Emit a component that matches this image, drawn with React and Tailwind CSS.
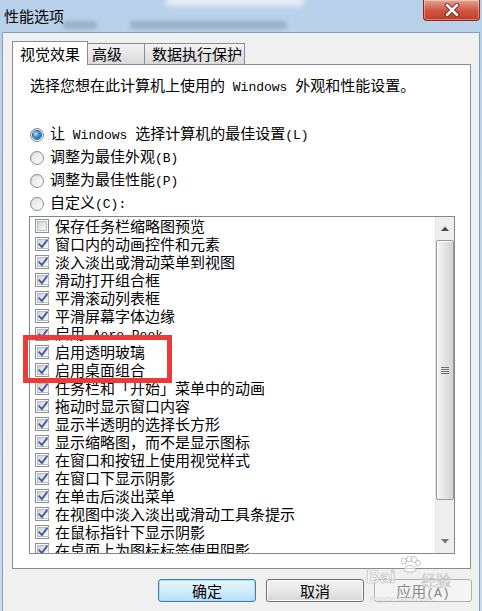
import React from "react";

function T({ text }) {
  const parts = text.match(/[\x00-\x7F]+|[^\x00-\x7F]+/g) || [];
  return parts.map((p, i) =>
    /^[\x00-\x7F]+$/.test(p) ? (
      <span key={i} className="[font-family:'Liberation_Mono',monospace] text-[13px] whitespace-pre">
        {p}
      </span>
    ) : (
      <span key={i}>{p}</span>
    )
  );
}

function Check({ checked }) {
  return (
    <span className="w-[14px] h-[14px] border border-[#8e8f8f] bg-white p-[1px] flex shrink-0">
      <span className="flex-1 bg-linear-to-br from-[#cfd2d5] to-[#fbfbfb] border border-[#b9bcbf] flex items-center justify-center">
        {checked && (
          <svg width="10" height="10" viewBox="0 0 10 10">
            <path d="M1.3 5.3 L3.9 8 L8.8 1.6" stroke="#3f5aa5" strokeWidth="1.9" fill="none" strokeLinecap="square" />
          </svg>
        )}
      </span>
    </span>
  );
}

function Radio({ on }) {
  return (
    <span className="w-[14px] h-[14px] rounded-full border border-[#8e8f8f] bg-linear-to-br from-[#cdd0d3] to-[#fdfdfd] flex items-center justify-center shrink-0">
      {on ? (
        <span className="w-[8px] h-[8px] rounded-full bg-[radial-gradient(circle_at_35%_35%,#bfe6fb_0%,#3c95d2_40%,#104c80_100%)] ring-1 ring-[#2c5f8c]" />
      ) : (
        <span className="w-[10px] h-[10px] rounded-full bg-linear-to-br from-[#e2e3e4] to-[#fbfbfb]" />
      )}
    </span>
  );
}

const items = [
  ["保存任务栏缩略图预览", false],
  ["窗口内的动画控件和元素", true],
  ["淡入淡出或滑动菜单到视图", true],
  ["滑动打开组合框", true],
  ["平滑滚动列表框", true],
  ["平滑屏幕字体边缘", true],
  ["启用 Aero Peek", true],
  ["启用透明玻璃", true],
  ["启用桌面组合", true],
  ["任务栏和「开始」菜单中的动画", true],
  ["拖动时显示窗口内容", true],
  ["显示半透明的选择长方形", true],
  ["显示缩略图，而不是显示图标", true],
  ["在窗口和按钮上使用视觉样式", true],
  ["在窗口下显示阴影", true],
  ["在单击后淡出菜单", true],
  ["在视图中淡入淡出或滑动工具条提示", true],
  ["在鼠标指针下显示阴影", true],
  ["在桌面上为图标标签使用阴影", true],
];

const radios = [
  ["让 Windows 选择计算机的最佳设置(L)", true],
  ["调整为最佳外观(B)", false],
  ["调整为最佳性能(P)", false],
  ["自定义(C):", false],
];

export default function App() {
  return (
    <div className="w-[482px] h-[611px] relative overflow-hidden flex flex-col bg-linear-to-b from-[#b8d0e9] to-[#cadcef] text-black [font-family:'Noto_Sans_CJK_SC',sans-serif]">
      {/* Title bar */}
      <div className="h-[32px] relative flex items-start shrink-0">
        <div className="absolute left-[165px] top-[-4px] w-[140px] h-[10px] rounded-full bg-white/70 blur-[3px]" />
        <div className="absolute left-[63px] top-[21px] w-[34px] h-[8px] rounded-sm bg-[#7f90a6]/50 blur-[2px]" />
        <div className="absolute left-[130px] top-[21px] w-[157px] h-[8px] rounded-sm bg-[#7f90a6]/50 blur-[2px]" />
        <span className="relative ml-[4px] mt-[7px] text-[15px] leading-[18px]">性能选项</span>
        <div className="relative ml-auto mr-[2px] w-[57px] h-[21px] rounded-b-[4px] border border-t-0 border-[#8a2b1d] bg-linear-to-b from-[#e5a495] via-[#cf5844] to-[#c23a26] flex items-center justify-center shadow-[inset_0_0_0_1px_rgba(255,255,255,0.35)]">
          <svg width="16" height="14" viewBox="0 0 16 14">
            <path d="M3 2 L13 12 M13 2 L3 12" stroke="#5a1a12" strokeWidth="4.2" strokeLinecap="round" />
            <path d="M3 2 L13 12 M13 2 L3 12" stroke="#ffffff" strokeWidth="2.6" strokeLinecap="round" />
          </svg>
        </div>
      </div>

      {/* Dialog body */}
      <div className="flex-1 mx-[2px] bg-[#f0f0f0] border border-b-0 border-[#8d9cae] flex flex-col pl-[9px] pt-[8px]">
        {/* Tabs */}
        <div className="flex items-end h-[23px] text-[15px]">
          <div className="relative z-10 -mb-px h-[24px] w-[76px] bg-white border border-b-0 border-[#898c95] flex items-center justify-center leading-[18px]">
            视觉效果
          </div>
          <div className="-ml-px h-[21px] w-[58px] border border-b-0 border-[#898c95] bg-linear-to-b from-[#f3f3f3] to-[#dadada] flex items-center pl-[4px] leading-[18px]">
            高级
          </div>
          <div className="-ml-px h-[21px] w-[101px] border border-b-0 border-[#898c95] bg-linear-to-b from-[#f3f3f3] to-[#dadada] flex items-center pl-[7px] leading-[18px]">
            数据执行保护
          </div>
        </div>

        {/* Panel */}
        <div className="w-[459px] h-[505px] border border-[#898c95] bg-white pl-[17px] pt-[11px] text-[15px] leading-[18px] flex flex-col">
          <div className="h-[18px] whitespace-nowrap">
            <T text="选择您想在此计算机上使用的 Windows 外观和性能设置。" />
          </div>

          <div className="mt-[29px] flex flex-col">
            {radios.map(([label, on]) => (
              <div key={label} className="h-[23px] flex items-center gap-[6px] whitespace-nowrap">
                <Radio on={on} />
                <span>
                  <T text={label} />
                </span>
              </div>
            ))}
          </div>

          {/* List box */}
          <div className="mt-[1px] -ml-px w-[426px] h-[338px] border border-[#828790] flex">
            <div className="flex-1 overflow-hidden flex flex-col pl-[5px]">
              {items.map(([label, checked]) => (
                <div key={label} className="h-[18px] shrink-0 flex items-center gap-[6px] whitespace-nowrap">
                  <Check checked={checked} />
                  <span>
                    <T text={label} />
                  </span>
                </div>
              ))}
            </div>
            {/* Scrollbar */}
            <div className="w-[19px] flex flex-col bg-[#eeeeee] border-l border-[#e4e4e4]">
              <div className="h-[23px] flex items-center justify-center">
                <svg width="8" height="5" viewBox="0 0 8 5">
                  <path d="M0 5 L4 0.5 L8 5 Z" fill="#4a4a4a" />
                </svg>
              </div>
              <div className="h-[260px] rounded-[2px] border border-[#9a9a9a] bg-linear-to-r from-[#f6f6f6] via-[#e4e4e4] to-[#d2d2d2] flex flex-col items-center justify-center gap-[1px] shadow-[inset_1px_1px_0_#ffffff]">
                <span className="w-[8px] h-[1px] bg-[#707070]" />
                <span className="w-[8px] h-[1px] bg-[#707070]" />
                <span className="w-[8px] h-[1px] bg-[#707070]" />
                <span className="w-[8px] h-[1px] bg-[#707070]" />
              </div>
              <div className="flex-1" />
              <div className="h-[23px] flex items-center justify-center">
                <svg width="8" height="5" viewBox="0 0 8 5">
                  <path d="M0 0 L8 0 L4 4.5 Z" fill="#777777" />
                </svg>
              </div>
            </div>
          </div>
        </div>

        {/* Buttons */}
        <div className="mt-[10px] pr-[7px] flex justify-end gap-[10px] text-[15px]">
          <button className="w-[98px] h-[23px] rounded-[3px] border border-[#3c7fb1] bg-linear-to-b from-[#e8f5fd] via-[#d4ecfb] to-[#b7def8] shadow-[inset_0_0_0_1px_#a8dcfa] leading-[21px]">
            确定
          </button>
          <button className="w-[98px] h-[23px] rounded-[3px] border border-[#707070] bg-linear-to-b from-[#f2f2f2] via-[#e9e9e9] to-[#d6d6d6] shadow-[inset_0_0_0_1px_#fbfbfb] leading-[21px]">
            取消
          </button>
          <button className="w-[98px] h-[23px] rounded-[3px] border border-[#adb2b5] bg-[#f4f4f4] text-[#8a8a8a] leading-[21px]">
            <T text="应用(A)" />
          </button>
        </div>
      </div>

      {/* Red annotation */}
      <div className="absolute left-[23px] top-[335px] w-[149px] h-[48px] border-[5px] border-[#ee3a36]" />

      {/* Baidu watermark */}
      <div className="absolute left-[366px] top-[554px] w-[95px] h-[54px] pointer-events-none">
        <svg className="absolute left-[32px] top-[2px]" width="24" height="18" viewBox="0 0 24 18">
          <g fill="rgba(255,255,255,0.55)" stroke="#c2c2c2" strokeWidth="1">
            <ellipse cx="6" cy="5" rx="2.5" ry="3" />
            <ellipse cx="11" cy="3" rx="2.5" ry="3" />
            <ellipse cx="16" cy="3.5" rx="2.5" ry="3" />
            <ellipse cx="20" cy="7" rx="2.3" ry="2.8" />
            <path d="M6 14 C8 8, 16 8, 18 14 C17 17, 7 17, 6 14 Z" />
          </g>
        </svg>
        <span className="absolute left-0 top-[13px] text-[19px] font-bold leading-[20px] text-white/60 [-webkit-text-stroke:0.7px_#bdbdbd] [font-family:'Liberation_Sans',sans-serif]">
          Bai
        </span>
        <span className="absolute left-[55px] top-[18px] text-[15px] leading-[16px] text-white/60 [-webkit-text-stroke:0.6px_#c4c4c4]">
          经验
        </span>
        <span className="absolute left-[4px] top-[40px] text-[8px] leading-[9px] text-[#d8d8d8] [font-family:'Liberation_Sans',sans-serif]">
          jingyan.baidu.com
        </span>
      </div>
    </div>
  );
}
